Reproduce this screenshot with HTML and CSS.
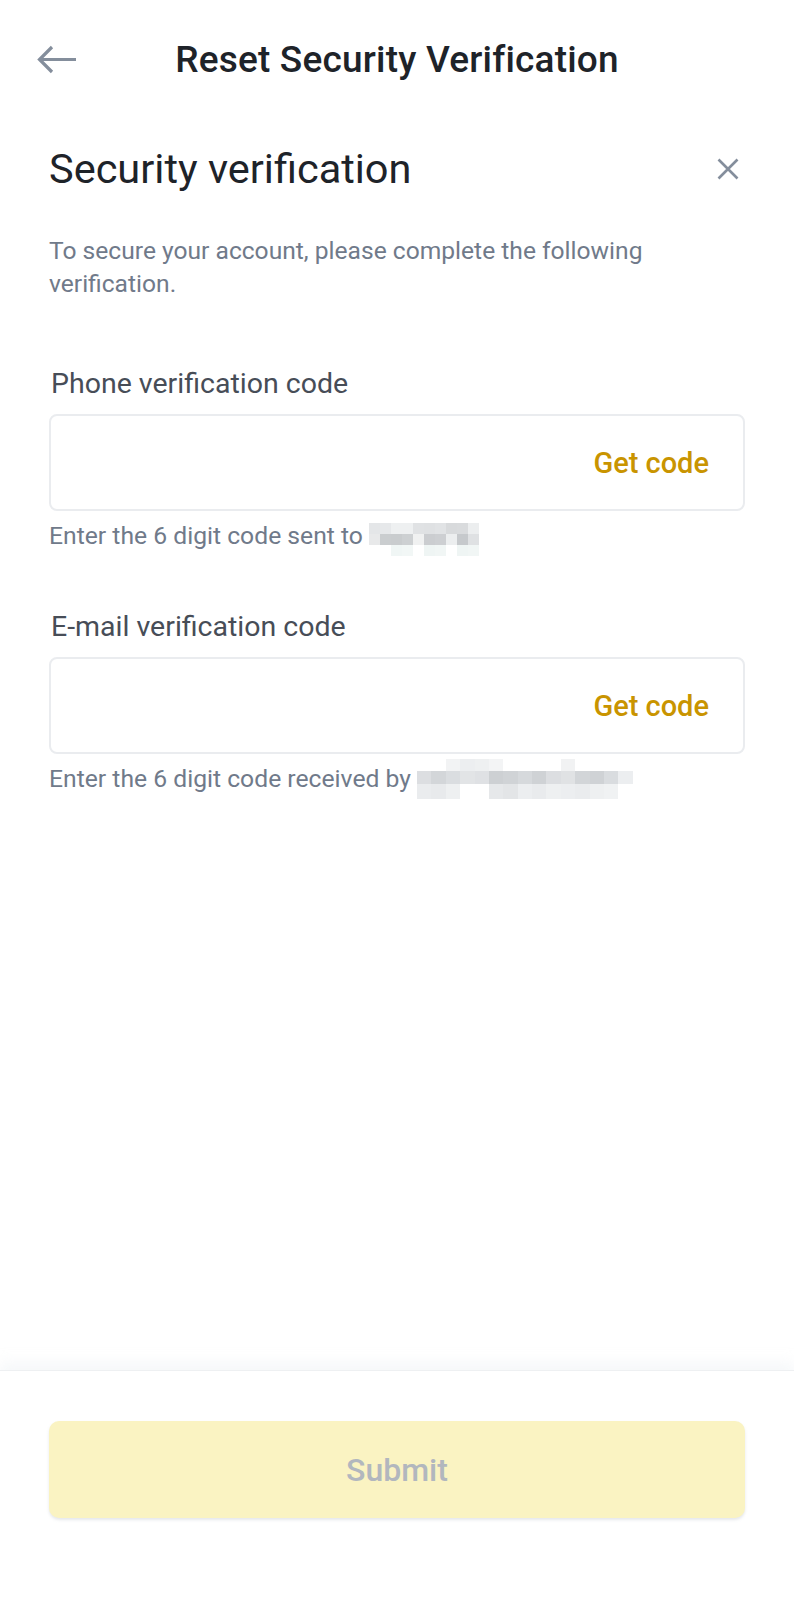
FILE: index.html
```html
<!DOCTYPE html>
<html lang="en">
<head>
<meta charset="UTF-8">
<title>Reset Security Verification</title>
<link rel="stylesheet" href="styles.css">
</head>
<body>
<div id="page">
    <div id="header">
        <span class="back">
            <svg width="40" height="30" viewBox="0 0 40 30"><path d="M39 14.5H3M15 2L2.5 14.5L15 27" fill="none" stroke="#848e9c" stroke-width="3.2"/></svg>
        </span>
        <h1>Reset Security Verification</h1>
    </div>

    <div id="content">
        <div class="headRow">
            <h2>Security verification</h2>
            <span class="close">
                <svg width="22" height="22" viewBox="0 0 22 22"><path d="M1.5 1.5L20.5 20.5M20.5 1.5L1.5 20.5" fill="none" stroke="#848e9c" stroke-width="2.6"/></svg>
            </span>
        </div>
        <p class="desc">To secure your account, please complete the following verification.</p>

        <div class="field">
            <div class="label">Phone verification code</div>
            <div class="input"><span class="getCode">Get code</span></div>
            <div class="hint">Enter the 6 digit code sent to
                <!-- blurred phone number -->
                <span class="mask m1">
                    <i style="background:#e4e6e8"></i><i style="background:#e6e8ea"></i><i style="background:#eef0f1"></i><i style="background:#eef0f1"></i><i style="background:#e0e2e4"></i><i style="background:#dfe1e3"></i><i style="background:#e1e3e5"></i><i style="background:#d8dadc"></i><i style="background:#d9dbdd"></i><i style="background:#eceeef"></i>
                    <i style="background:#e8e9ea"></i><i style="background:#cacdcf"></i><i style="background:#c9ccce"></i><i style="background:#cdd0d2"></i><i style="background:#f0f1f1"></i><i style="background:#cbcdd0"></i><i style="background:#cdcfd2"></i><i style="background:#eceeef"></i><i style="background:#c6c9cc"></i><i style="background:#dfe1e3"></i>
                    <i style="background:#ffffff"></i><i style="background:#ffffff"></i><i style="background:#f0f6f5"></i><i style="background:#f2f7f6"></i><i style="background:#ffffff"></i><i style="background:#eff5f4"></i><i style="background:#f1f6f5"></i><i style="background:#ffffff"></i><i style="background:#eff5f4"></i><i style="background:#f1f6f5"></i>
                </span>
            </div>
        </div>

        <div class="field">
            <div class="label">E-mail verification code</div>
            <div class="input"><span class="getCode">Get code</span></div>
            <div class="hint">Enter the 6 digit code received by
                <!-- blurred e-mail address -->
                <span class="mask m2">
                    <i style="background:#ffffff"></i><i style="background:#ffffff"></i><i style="background:#f2f3f4"></i><i style="background:#eceef0"></i><i style="background:#eef0f1"></i><i style="background:#f3f4f5"></i><i style="background:#ffffff"></i><i style="background:#ffffff"></i><i style="background:#ffffff"></i><i style="background:#ffffff"></i><i style="background:#f1f2f3"></i><i style="background:#ffffff"></i><i style="background:#ffffff"></i><i style="background:#ffffff"></i><i style="background:#ffffff"></i>
                    <i style="background:#dcdee1"></i><i style="background:#d3d6d9"></i><i style="background:#dadde0"></i><i style="background:#e2e4e6"></i><i style="background:#dfe1e4"></i><i style="background:#cdd0d3"></i><i style="background:#d0d3d6"></i><i style="background:#d6d9dc"></i><i style="background:#cfd2d5"></i><i style="background:#dcdee1"></i><i style="background:#e0e2e4"></i><i style="background:#d2d5d8"></i><i style="background:#cfd2d5"></i><i style="background:#d9dcdf"></i><i style="background:#eceef0"></i>
                    <i style="background:#eaecee"></i><i style="background:#e8eaec"></i><i style="background:#eef0f1"></i><i style="background:#ffffff"></i><i style="background:#ffffff"></i><i style="background:#e6e8ea"></i><i style="background:#e3e5e7"></i><i style="background:#eceef0"></i><i style="background:#e9ebed"></i><i style="background:#eef0f1"></i><i style="background:#eceef0"></i><i style="background:#eaecee"></i><i style="background:#eef0f1"></i><i style="background:#f0f2f3"></i><i style="background:#ffffff"></i>
                </span>
            </div>
        </div>
    </div>

    <div id="footer">
        <div class="submit">Submit</div>
    </div>
</div>
</body>
</html>
```

FILE: styles.css
```css
* {
    padding: 0;
    margin: 0;
    box-sizing: border-box;
}

body {
    background-color: #ffffff;
    font-family: Roboto, "Noto Sans", sans-serif;
    color: #1e2329;
}

#page {
    width: 794px;
    min-height: 1600px;
    display: flex;
    flex-direction: column;
}

#header {
    height: 118px;
    display: flex;
    align-items: center;
    justify-content: center;
    position: relative;
}

#header .back {
    position: absolute;
    left: 37px;
    top: 45px;
    width: 40px;
    height: 30px;
    display: block;
}

#header .back svg {
    display: block;
}

#header h1 {
    font-size: 37px;
    font-weight: 500;
    color: #1e2329;
    letter-spacing: 0.2px;
}

#content {
    padding: 26px 49px 0 49px;
}

#content .headRow {
    display: flex;
    align-items: center;
    justify-content: space-between;
    height: 50px;
}

#content h2 {
    font-size: 41.5px;
    font-weight: 400;
    line-height: 50px;
    color: #1e2329;
}

#content .close {
    width: 22px;
    height: 22px;
    margin-right: 6px;
}

#content .close svg {
    display: block;
}

#content .desc {
    margin-top: 40px;
    width: 640px;
    font-size: 24.6px;
    line-height: 33px;
    color: #707a8a;
}

.field {
    margin-top: 66px;
}

.field + .field {
    margin-top: 56px;
}

.field .label {
    padding-left: 2px;
    font-size: 28.5px;
    line-height: 36px;
    color: #474d57;
}

.field .input {
    margin-top: 12px;
    height: 97px;
    border: 2px solid #eaecef;
    border-radius: 8px;
    display: flex;
    align-items: center;
    justify-content: flex-end;
    padding-right: 34px;
}

.field .getCode {
    font-size: 29px;
    font-weight: 500;
    color: #c99400;
}

.field .hint {
    margin-top: 8px;
    height: 34px;
    font-size: 24.7px;
    line-height: 34px;
    color: #707a8a;
    display: flex;
    align-items: center;
    gap: 6px;
}

.mask {
    display: grid;
}

.mask i {
    display: block;
}

.mask.m1 {
    grid-template-columns: repeat(10, 11px);
    grid-template-rows: 11px 11px 11px;
    margin: 3px 0 -3px 0;
}

.mask.m2 {
    grid-template-columns: repeat(15, 14.4px);
    grid-template-rows: 12px 13px 15px;
    margin: -3px 0;
}

#footer {
    margin-top: auto;
    height: 230px;
    border-top: 1px solid #eef0f2;
    box-shadow: 0 -8px 12px rgba(230, 236, 240, 0.35);
    padding: 50px 49px 0 49px;
}

#footer .submit {
    height: 97px;
    border-radius: 10px;
    background-color: #faf3c2;
    box-shadow: 0 2px 3px rgba(200, 205, 210, 0.45);
    display: flex;
    align-items: center;
    justify-content: center;
    font-size: 32px;
    font-weight: 500;
    color: #b2b7be;
}
```
